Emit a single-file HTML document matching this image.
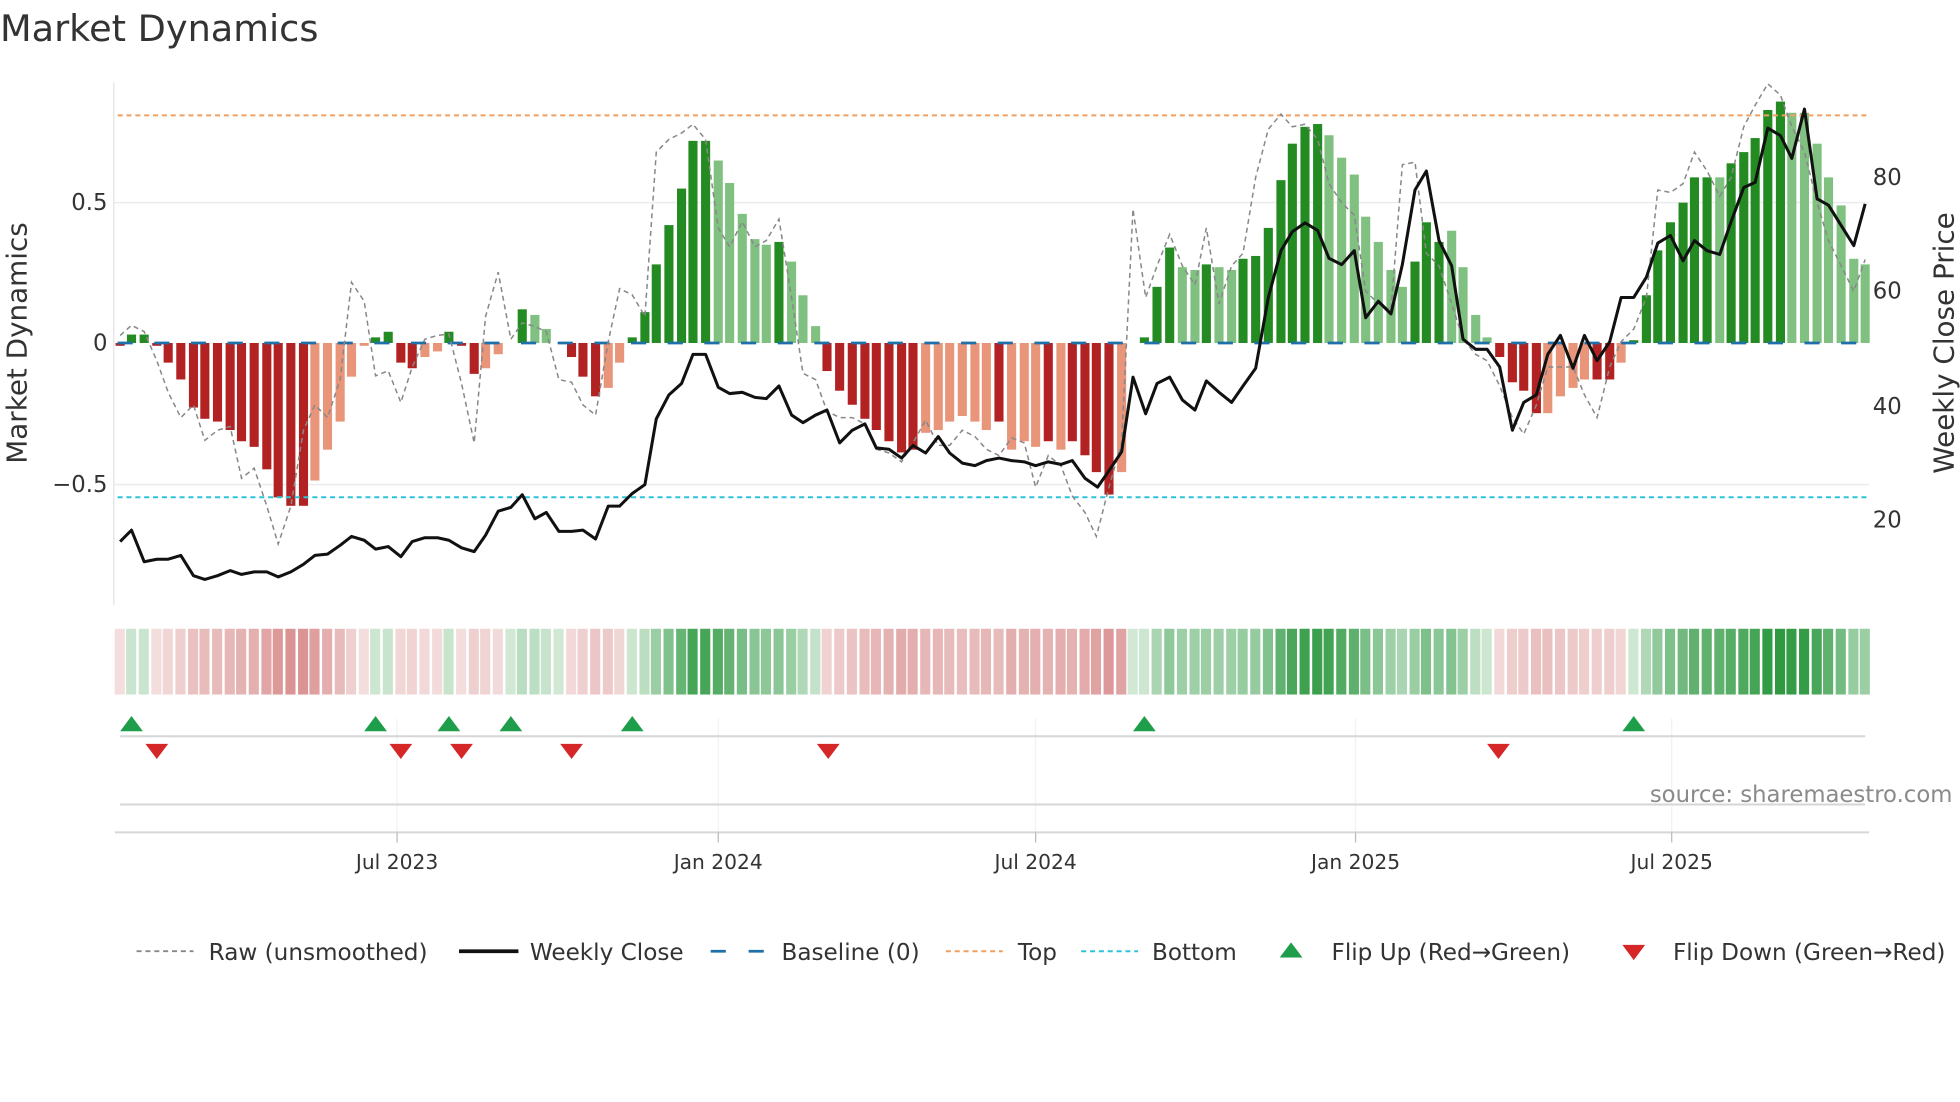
<!DOCTYPE html>
<html><head><meta charset="utf-8"><style>
html,body{margin:0;padding:0;background:#fff;}
svg{display:block;font-family:"DejaVu Sans","Liberation Sans",sans-serif;}
</style></head><body>
<svg id="s" width="1960" height="1102" viewBox="0 0 1550 871" xmlns="http://www.w3.org/2000/svg">
<text x="0" y="32" font-size="29" fill="#333">Market Dynamics</text>
<g stroke="#ececec" stroke-width="1.2"><line x1="90" y1="160" x2="1478" y2="160"/><line x1="90" y1="383" x2="1478" y2="383"/></g>
<line x1="90" y1="65" x2="90" y2="478" stroke="#e4e4e4" stroke-width="1"/>
<g id="bars"></g>
<line x1="93" y1="271" x2="1476" y2="271" stroke="#1f6fa8" stroke-width="2.2" stroke-dasharray="12,17"/>
<line x1="93" y1="91" x2="1476" y2="91" stroke="#f0a060" stroke-width="1.6" stroke-dasharray="4,3"/>
<line x1="93" y1="393" x2="1476" y2="393" stroke="#2ec4d8" stroke-width="1.6" stroke-dasharray="4,3"/>
<polyline id="raw" fill="none" stroke="#888" stroke-width="1.2" stroke-dasharray="4,3"/>
<polyline id="px" fill="none" stroke="#111" stroke-width="2.4" stroke-linejoin="round"/>
<g font-size="18" fill="#333" text-anchor="end"><text x="85" y="166">0.5</text><text x="85" y="277">0</text><text x="85" y="389">−0.5</text></g>
<g font-size="18" fill="#333"><text x="1481" y="146">80</text><text x="1481" y="236">60</text><text x="1481" y="327">40</text><text x="1481" y="417">20</text></g>
<text transform="translate(21,271) rotate(-90)" font-size="22" fill="#333" text-anchor="middle">Market Dynamics</text>
<text transform="translate(1545,271) rotate(-90)" font-size="22" fill="#333" text-anchor="middle">Weekly Close Price</text>
<g id="strip"></g>
<g stroke="#f0f2f4" stroke-width="1"><line x1="314" y1="568" x2="314" y2="658"/><line x1="568" y1="568" x2="568" y2="658"/><line x1="819" y1="568" x2="819" y2="658"/><line x1="1072" y1="568" x2="1072" y2="658"/><line x1="1322" y1="568" x2="1322" y2="658"/></g>
<line x1="95" y1="582" x2="1475" y2="582" stroke="#d6d6d6" stroke-width="1.6"/>
<line x1="95" y1="636" x2="1475" y2="636" stroke="#d6d6d6" stroke-width="1.6"/>
<line x1="91" y1="658" x2="1478" y2="658" stroke="#d6d6d6" stroke-width="1.6"/>
<g stroke="#bbb" stroke-width="1"><line x1="314" y1="658" x2="314" y2="666"/><line x1="568" y1="658" x2="568" y2="666"/><line x1="819" y1="658" x2="819" y2="666"/><line x1="1072" y1="658" x2="1072" y2="666"/><line x1="1322" y1="658" x2="1322" y2="666"/></g>
<g font-size="16" fill="#333" text-anchor="middle"><text x="314" y="687">Jul 2023</text><text x="568" y="687">Jan 2024</text><text x="819" y="687">Jul 2024</text><text x="1072" y="687">Jan 2025</text><text x="1322" y="687">Jul 2025</text></g>
<text x="1544" y="634" font-size="18" fill="#8a8a8a" text-anchor="end">source: sharemaestro.com</text>
<g id="tri"></g>
<g font-size="18.3" fill="#333">
<line x1="108" y1="752" x2="153" y2="752" stroke="#888" stroke-width="1.5" stroke-dasharray="4,3"/><text x="165" y="759">Raw (unsmoothed)</text>
<line x1="363" y1="752" x2="410" y2="752" stroke="#111" stroke-width="3"/><text x="419" y="759">Weekly Close</text>
<line x1="562" y1="752" x2="608" y2="752" stroke="#1f6fa8" stroke-width="2.2" stroke-dasharray="12,18"/><text x="618" y="759">Baseline (0)</text>
<line x1="748" y1="752" x2="793" y2="752" stroke="#f0a060" stroke-width="1.6" stroke-dasharray="4,3"/><text x="805" y="759">Top</text>
<line x1="855" y1="752" x2="900" y2="752" stroke="#2ec4d8" stroke-width="1.6" stroke-dasharray="4,3"/><text x="911" y="759">Bottom</text>
<polygon points="1012,757 1030,757 1021,745" fill="#1e9e4a"/><text x="1053" y="759">Flip Up (Red→Green)</text>
<polygon points="1283,747 1301,747 1292,759" fill="#d62728"/><text x="1323" y="759">Flip Down (Green→Red)</text>
</g>
</svg>
<script>
var B=[[95,-.01,'d'],[104,.03,'d'],[114,.03,'d'],[124,-.01,'d'],[133,-.07,'d'],[143,-.13,'d'],[153,-.23,'d'],[162,-.27,'d'],[172,-.28,'d'],[182,-.31,'d'],[191,-.35,'d'],[201,-.37,'d'],[211,-.45,'d'],[220,-.55,'d'],[230,-.58,'d'],[240,-.58,'d'],[249,-.49,'l'],[259,-.38,'l'],[269,-.28,'l'],[278,-.12,'l'],[288,-.01,'l'],[297,.02,'d'],[307,.04,'d'],[317,-.07,'d'],[326,-.09,'d'],[336,-.05,'l'],[346,-.03,'l'],[355,.04,'d'],[365,-.01,'d'],[375,-.11,'d'],[384,-.09,'l'],[394,-.04,'l'],[404,0,'l'],[413,.12,'d'],[423,.1,'l'],[432,.05,'l'],[442,0,'l'],[452,-.05,'d'],[461,-.12,'d'],[471,-.19,'d'],[481,-.16,'l'],[490,-.07,'l'],[500,.02,'d'],[510,.11,'d'],[519,.28,'d'],[529,.42,'d'],[539,.55,'d'],[548,.72,'d'],[558,.72,'d'],[568,.65,'l'],[577,.57,'l'],[587,.46,'l'],[597,.37,'l'],[606,.35,'l'],[616,.36,'d'],[626,.29,'l'],[635,.17,'l'],[645,.06,'l'],[654,-.1,'d'],[664,-.17,'d'],[674,-.22,'d'],[684,-.27,'d'],[693,-.31,'d'],[703,-.35,'d'],[713,-.39,'d'],[722,-.38,'d'],[732,-.32,'l'],[742,-.31,'l'],[751,-.28,'l'],[761,-.26,'l'],[771,-.28,'l'],[780,-.31,'l'],[790,-.28,'d'],[800,-.38,'l'],[810,-.35,'l'],[819,-.37,'l'],[829,-.35,'d'],[839,-.38,'l'],[848,-.35,'d'],[858,-.4,'d'],[867,-.46,'d'],[877,-.54,'d'],[887,-.46,'l'],[896,0,'l'],[905,.02,'d'],[915,.2,'d'],[925,.34,'d'],[935,.27,'l'],[945,.26,'l'],[954,.28,'d'],[964,.27,'l'],[974,.26,'l'],[983,.3,'d'],[993,.31,'d'],[1003,.41,'d'],[1013,.58,'d'],[1022,.71,'d'],[1032,.77,'d'],[1042,.78,'d'],[1051,.74,'l'],[1061,.66,'l'],[1071,.6,'l'],[1080,.45,'l'],[1090,.36,'l'],[1100,.26,'l'],[1109,.2,'l'],[1119,.29,'d'],[1128,.43,'d'],[1138,.36,'d'],[1148,.4,'l'],[1157,.27,'l'],[1167,.1,'l'],[1176,.02,'l'],[1186,-.05,'d'],[1196,-.14,'d'],[1205,-.17,'d'],[1215,-.25,'d'],[1224,-.25,'l'],[1234,-.19,'l'],[1244,-.16,'l'],[1253,-.13,'l'],[1263,-.13,'d'],[1273,-.13,'d'],[1282,-.07,'l'],[1292,.01,'d'],[1302,.17,'d'],[1311,.33,'d'],[1321,.43,'d'],[1331,.5,'d'],[1340,.59,'d'],[1350,.59,'d'],[1360,.59,'l'],[1369,.64,'d'],[1379,.68,'d'],[1388,.73,'d'],[1398,.83,'d'],[1408,.86,'d'],[1417,.82,'l'],[1427,.82,'l'],[1437,.71,'l'],[1446,.59,'l'],[1456,.49,'l'],[1466,.3,'l'],[1475,.28,'l']];
var h="",s="";
B.forEach(function(b){var v=b[1],y=271-v*222,t=Math.min(y,271),hh=Math.abs(v*222);
var c=v>=0?(b[2]=='d'?'#238b22':'#80c080'):(b[2]=='d'?'#b22222':'#e8957a');
if(hh>0.3)h+='<rect x="'+(b[0]-3.6)+'" y="'+t+'" width="7.2" height="'+hh+'" fill="'+c+'"/>';
var a=0.22+0.75*Math.min(Math.abs(v)/0.85,1);
var sc=v>=0?'rgba(40,150,60,'+a+')':'rgba(190,60,60,'+(a*0.75)+')';
s+='<rect x="'+(b[0]-4.3)+'" y="497" width="8" height="52" fill="'+sc+'"/>';});
document.getElementById('bars').innerHTML=h;document.getElementById('strip').innerHTML=s;
var P=[[95,428],[104,419],[114,444],[124,442],[133,442],[143,439],[153,455],[162,458],[172,455],[182,451],[191,454],[201,452],[211,452],[220,456],[230,452],[240,446],[249,439],[259,438],[269,431],[278,424],[288,427],[297,434],[307,432],[317,440],[326,428],[336,425],[346,425],[355,427],[365,433],[375,436],[384,423],[394,404],[404,401],[413,391],[423,410],[432,405],[442,420],[452,420],[461,419],[471,426],[481,400],[490,400],[500,390],[510,383],[519,331],[529,312],[539,303],[548,280],[558,280],[568,306],[577,311],[587,310],[597,314],[606,315],[616,305],[626,328],[635,334],[645,328],[654,324],[664,350],[674,340],[684,335],[693,354],[703,355],[713,362],[722,352],[732,358],[742,345],[751,358],[761,366],[771,368],[780,364],[790,362],[800,364],[810,365],[819,368],[829,365],[839,367],[848,364],[858,378],[868,385],[877,372],[887,357],[896,298],[906,327],[915,303],[925,298],[935,316],[945,324],[954,301],[964,310],[974,318],[983,305],[993,291],[1003,235],[1013,198],[1022,183],[1032,176],[1042,182],[1051,204],[1061,209],[1071,198],[1080,251],[1090,238],[1100,248],[1109,209],[1119,150],[1128,135],[1138,190],[1148,210],[1157,268],[1167,276],[1176,276],[1186,290],[1196,340],[1205,318],[1215,312],[1224,280],[1234,265],[1244,291],[1253,265],[1263,285],[1273,270],[1282,235],[1292,235],[1302,219],[1311,192],[1321,186],[1331,206],[1340,190],[1350,198],[1360,201],[1369,175],[1379,148],[1388,144],[1398,101],[1408,107],[1417,125],[1427,86],[1437,157],[1446,162],[1456,178],[1466,194],[1475,161]];
var R=[[95,265],[104,257],[114,262],[124,285],[133,310],[143,330],[153,320],[162,348],[172,340],[182,337],[191,378],[201,370],[211,400],[220,430],[230,400],[240,340],[249,320],[259,330],[269,300],[278,223],[288,238],[297,297],[307,293],[317,318],[326,290],[336,268],[346,265],[355,264],[365,303],[375,350],[384,250],[394,215],[404,268],[413,255],[423,258],[432,262],[442,300],[452,302],[461,320],[471,328],[481,270],[490,228],[500,233],[510,250],[519,120],[529,110],[539,105],[548,98],[558,110],[568,180],[577,195],[587,175],[597,195],[606,190],[616,173],[626,235],[635,295],[645,300],[654,325],[664,330],[674,330],[684,335],[693,355],[703,358],[713,365],[722,350],[732,332],[742,352],[751,352],[761,340],[771,345],[780,355],[790,360],[800,346],[810,350],[819,385],[829,360],[839,368],[848,392],[858,405],[867,424],[877,385],[887,350],[896,165],[906,235],[915,210],[925,185],[935,210],[945,225],[954,180],[964,240],[974,210],[983,200],[993,140],[1003,102],[1013,90],[1022,100],[1032,98],[1042,110],[1051,145],[1061,160],[1071,170],[1080,230],[1090,240],[1100,245],[1109,130],[1119,128],[1128,200],[1138,210],[1148,240],[1157,268],[1167,280],[1176,285],[1186,305],[1196,330],[1205,343],[1215,320],[1224,290],[1234,290],[1244,290],[1253,312],[1263,330],[1273,290],[1282,270],[1292,260],[1302,235],[1311,150],[1321,152],[1331,145],[1340,120],[1350,135],[1360,155],[1369,140],[1379,100],[1388,83],[1398,66],[1408,75],[1417,100],[1427,120],[1437,160],[1446,190],[1456,210],[1466,230],[1475,205]];
document.getElementById('px').setAttribute('points',P.join(' '));
document.getElementById('raw').setAttribute('points',R.join(' '));
var t="";[104,297,355,404,500,905,1292].forEach(function(x){t+='<polygon points="'+(x-9)+',578 '+(x+9)+',578 '+x+',566" fill="#1e9e4a"/>';});
[124,317,365,452,655,1185].forEach(function(x){t+='<polygon points="'+(x-9)+',588 '+(x+9)+',588 '+x+',600" fill="#d62728"/>';});
document.getElementById('tri').innerHTML=t;
</script>
</body></html>
